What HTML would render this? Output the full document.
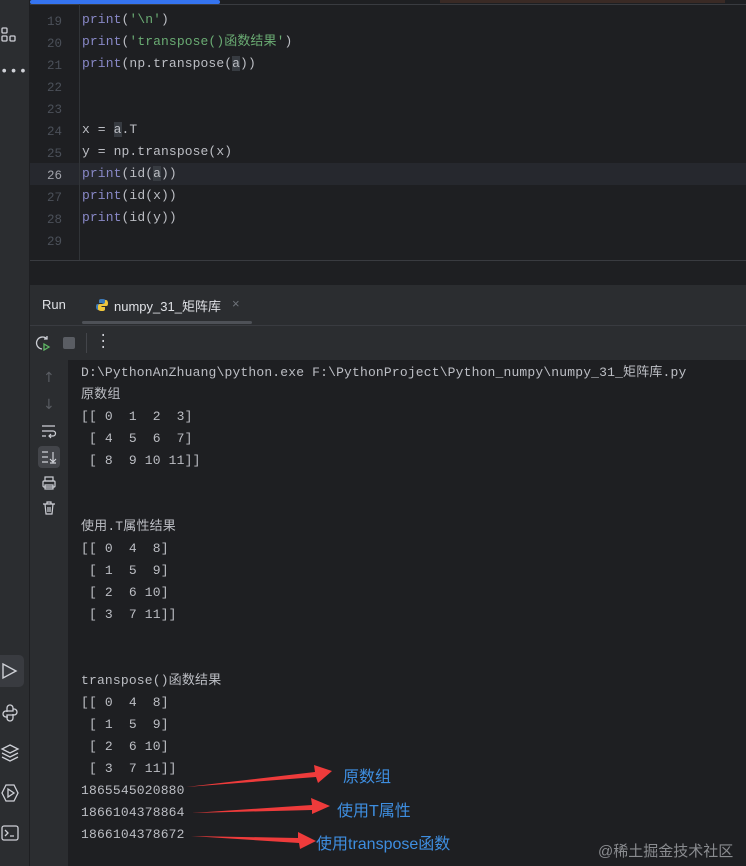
<!DOCTYPE html>
<html><head><meta charset="utf-8"><style>
*{margin:0;padding:0;box-sizing:border-box}
body{width:746px;height:866px;background:#1e1f22;position:relative;overflow:hidden;font-family:"Liberation Mono","Noto Sans CJK SC",monospace;font-size:13px;color:#bcbec4}
.abs{position:absolute}
.side{left:0;top:0;width:30px;height:866px;background:#2b2d30;border-right:1px solid #1e1f22}
.ln{position:absolute;left:36px;width:26px;text-align:right;color:#4b5059;font-size:12.5px}
.code{position:absolute;left:82px;white-space:pre;line-height:22px;letter-spacing:0.1px}
.kw{color:#8888c6}.str{color:#6aab73}
.out{position:absolute;left:81px;white-space:pre;line-height:22px;color:#bcbec4;letter-spacing:0.17px}
.ann{position:absolute;color:#3e8ee0;font-family:"Liberation Sans","Noto Sans CJK SC",sans-serif;font-size:16px}
</style></head><body>
<div class="abs side"></div>
<div class="abs" style="left:30px;top:0;width:190px;height:4px;background:#3574f0;border-radius:2px"></div>
<div class="abs" style="left:440px;top:0;width:285px;height:3px;background:#3a2a25"></div>
<div class="abs" style="left:30px;top:4px;width:716px;height:1px;background:#393b40"></div>
<div class="abs" style="left:30px;top:163px;width:716px;height:22px;background:#26282e"></div>
<div class="abs" style="left:79px;top:4px;width:1px;height:256px;background:#313438"></div>
<div class="abs" style="left:30px;top:260px;width:716px;height:1px;background:#393b40"></div>
<div class="abs" style="left:30px;top:261px;width:716px;height:24px;background:#1e1f22"></div>
<div class="abs" style="left:30px;top:285px;width:716px;height:75px;background:#2b2d30"></div>
<div class="abs" style="left:30px;top:325px;width:716px;height:1px;background:#393b40"></div>
<div class="abs" style="left:30px;top:360px;width:38px;height:506px;background:#2b2d30"></div>
<div class="abs" style="left:68px;top:360px;width:678px;height:506px;background:#1e1f22"></div>
<div class="abs" style="left:82px;top:321px;width:170px;height:3px;background:#4e5157;border-radius:2px"></div>
<svg class="abs" style="left:0;top:26px" width="20" height="20" viewBox="0 0 20 20" fill="none" stroke="#ced0d6" stroke-width="1.3"><rect x="2" y="2" width="5" height="5" rx="1"/><rect x="2" y="10" width="5" height="5" rx="1"/><rect x="10" y="10" width="5" height="5" rx="1"/></svg>
<div class="abs" style="left:0;top:64px;color:#ced0d6;font-size:14px;letter-spacing:1px">•••</div>
<div class="abs" style="left:0;top:655px;width:24px;height:32px;background:#393b40;border-radius:0 5px 5px 0"></div>
<svg class="abs" style="left:0;top:661px" width="20" height="20" viewBox="0 0 20 20" fill="none" stroke="#ced0d6" stroke-width="1.4"><path d="M3 3 L16 10 L3 17 Z"/></svg>
<svg class="abs" style="left:0;top:703px" width="20" height="20" viewBox="0 0 20 20" fill="none" stroke="#ced0d6" stroke-width="1.3"><path d="M7 9V5a3 3 0 0 1 6 0v3H6a3 3 0 0 0 0 6h2M13 11v4a3 3 0 0 1-6 0v-3h7a3 3 0 0 0 0-6h-1"/></svg>
<svg class="abs" style="left:0;top:743px" width="20" height="20" viewBox="0 0 20 20" fill="none" stroke="#ced0d6" stroke-width="1.3"><path d="M10 2L18 6L10 10L2 6Z M2 10L10 14L18 10 M2 14L10 18L18 14"/></svg>
<svg class="abs" style="left:0;top:783px" width="20" height="20" viewBox="0 0 20 20" fill="none" stroke="#ced0d6" stroke-width="1.3"><path d="M6 2h8l4 8-4 8H6L2 10Z M8 6l6 4-6 4Z"/></svg>
<svg class="abs" style="left:0;top:823px" width="20" height="20" viewBox="0 0 20 20" fill="none" stroke="#ced0d6" stroke-width="1.3"><rect x="2" y="3" width="16" height="14" rx="2"/><path d="M5 7l3 3-3 3M10 13h4"/></svg>
<div class="ln" style="top:11px;line-height:22px">19<br>20<br>21<br>22<br>23<br>24<br>25<br><span style="color:#a1a3ab">26</span><br>27<br>28<br>29</div>
<div class="code" style="top:9px"><span class="kw">print</span>(<span class="str">'\n'</span>)
<span class="kw">print</span>(<span class="str">'transpose()函数结果'</span>)
<span class="kw">print</span>(np.transpose(<span style="background:#373b41">a</span>))


x = <span style="background:#373b41">a</span>.T
y = np.transpose(x)
<span class="kw">print</span>(id(<span style="background:#373b41">a</span>))
<span class="kw">print</span>(id(x))
<span class="kw">print</span>(id(y))</div>
<div class="abs" style="left:42px;top:297px;font-family:'Liberation Sans',sans-serif;font-size:13px;color:#dfe1e5">Run</div>
<svg class="abs" style="left:95px;top:298px" width="14" height="14" viewBox="0 0 14 14"><path d="M7 1C4 1 4 2 4 3v2h3.5v1H2.5C1 6 1 8 1 9s.5 3 2 3h1V10c0-1 1-2 2-2h3c1 0 2-1 2-2V3c0-1-1-2-4-2z" fill="#3d7ab8"/><path d="M7 13c3 0 3-1 3-2V9H6.5V8h5c1.5 0 1.5-2 1.5-3s-.5-3-2-3h-1v2c0 1-1 2-2 2H5c-1 0-2 1-2 2v3c0 1 1 2 4 2z" fill="#f0c73c"/></svg>
<div class="abs" style="left:114px;top:296px;font-family:'Liberation Sans','Noto Sans CJK SC',sans-serif;font-size:13px;color:#dfe1e5">numpy_31_矩阵库</div>
<div class="abs" style="left:232px;top:296px;color:#6f737a;font-size:13px;font-family:'Liberation Sans',sans-serif">×</div>
<svg class="abs" style="left:35px;top:335px" width="16" height="16" viewBox="0 0 16 16" fill="none" stroke="#ced0d6" stroke-width="1.3"><path d="M12 4A6 6 0 1 0 7 14"/><path d="M12 1v3H9"/><path d="M9 9l5 3-5 3Z" stroke="#5fb865"/></svg>
<div class="abs" style="left:63px;top:337px;width:12px;height:12px;background:#5a5d63;border-radius:2px"></div>
<div class="abs" style="left:86px;top:333px;width:1px;height:20px;background:#43454a"></div>
<div class="abs" style="left:99px;top:333px;color:#ced0d6;font-size:14px;line-height:6px">·<br>·<br>·</div>
<div class="abs" style="left:43px;top:370px;color:#5a5d63;font-size:14px;font-family:'DejaVu Sans',sans-serif">↑</div>
<div class="abs" style="left:43px;top:397px;color:#5a5d63;font-size:14px;font-family:'DejaVu Sans',sans-serif">↓</div>
<svg class="abs" style="left:40px;top:423px" width="18" height="16" viewBox="0 0 18 16" fill="none" stroke="#ced0d6" stroke-width="1.2"><path d="M2 3h13M2 8h11a2.5 2.5 0 0 1 0 5H9M11 11l-2 2 2 2M2 13h4"/></svg>
<div class="abs" style="left:38px;top:446px;width:22px;height:22px;background:#43454a;border-radius:4px"></div>
<svg class="abs" style="left:40px;top:449px" width="18" height="16" viewBox="0 0 18 16" fill="none" stroke="#ced0d6" stroke-width="1.2"><path d="M2 3h6M2 8h6M2 13h6M13 3v10M10 10l3 3 3-3M10 14h6"/></svg>
<svg class="abs" style="left:41px;top:475px" width="16" height="16" viewBox="0 0 16 16" fill="none" stroke="#ced0d6" stroke-width="1.2"><rect x="4" y="2" width="8" height="4"/><rect x="2" y="6" width="12" height="6" rx="1"/><rect x="4" y="10" width="8" height="4"/></svg>
<svg class="abs" style="left:41px;top:500px" width="16" height="16" viewBox="0 0 16 16" fill="none" stroke="#ced0d6" stroke-width="1.2"><path d="M2 4h12M6 4V2h4v2M4 4l1 10h6l1-10M7 7v5M9 7v5"/></svg>
<div class="out" style="top:362px">D:\PythonAnZhuang\python.exe F:\PythonProject\Python_numpy\numpy_31_矩阵库.py
原数组
[[ 0  1  2  3]
 [ 4  5  6  7]
 [ 8  9 10 11]]


使用.T属性结果
[[ 0  4  8]
 [ 1  5  9]
 [ 2  6 10]
 [ 3  7 11]]


transpose()函数结果
[[ 0  4  8]
 [ 1  5  9]
 [ 2  6 10]
 [ 3  7 11]]
1865545020880
1866104378864
1866104378672</div>
<svg class="abs" style="left:0;top:0" width="746" height="866">
<polygon points="186,787 315,772 314,765 332,771 318,783 316,777" fill="#ee3b3b"/>
<polygon points="192,813 312,805 311,798 330,806 312,814 312,810" fill="#ee3b3b"/>
<polygon points="191,836 298,838 298,832 316,841 300,849 299,843" fill="#ee3b3b"/>
</svg>
<div class="ann" style="left:343px;top:763px">原数组</div>
<div class="ann" style="left:337px;top:797px">使用T属性</div>
<div class="ann" style="left:316px;top:830px">使用transpose函数</div>
<div class="abs" style="left:598px;top:840px;color:#8a8c90;font-family:'Liberation Sans','Noto Sans CJK SC',sans-serif;font-size:15px">@稀土掘金技术社区</div>
</body></html>
